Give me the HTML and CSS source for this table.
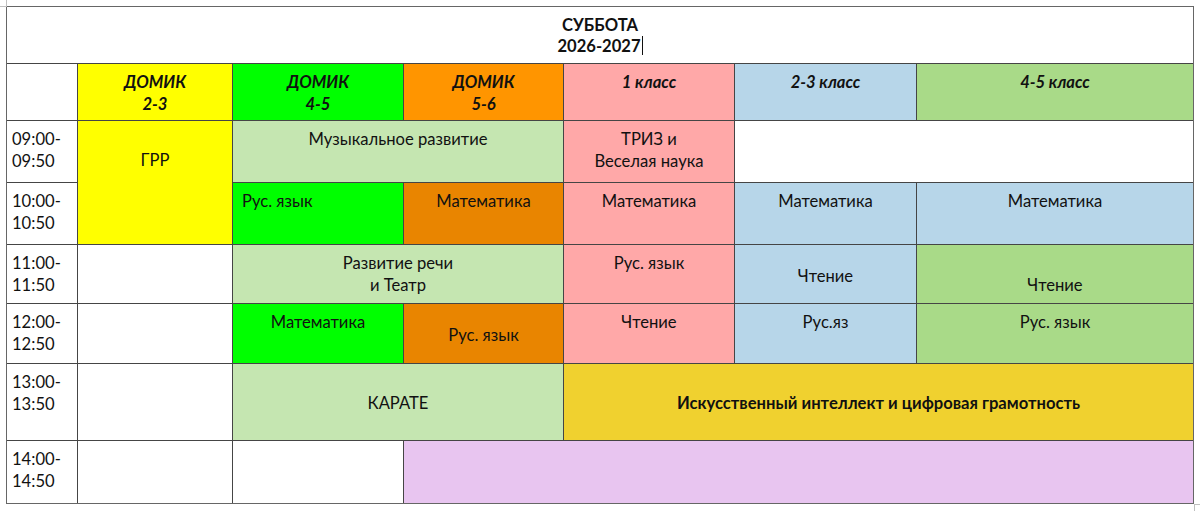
FILE: index.html
```html
<!DOCTYPE html>
<html lang="ru">
<head>
<meta charset="utf-8">
<title>Суббота 2026-2027</title>
<link rel="stylesheet" href="styles.css">
</head>
<body>
<div class="page">
  <div class="schedule">
    <div class="cell title">СУББОТА<br>2026-2027<span class="caret"></span></div>

    <div class="cell"></div>
    <div class="cell head yellow">ДОМИК<br>2-3</div>
    <div class="cell head green">ДОМИК<br>4-5</div>
    <div class="cell head orange">ДОМИК<br>5-6</div>
    <div class="cell head pink">1 класс</div>
    <div class="cell head blue">2-3 класс</div>
    <div class="cell head leaf">4-5 класс</div>

    <div class="cell time">09:00-<br>09:50</div>
    <div class="cell yellow grr">ГРР</div>
    <div class="cell mint span-2">Музыкальное развитие</div>
    <div class="cell pink">ТРИЗ и<br>Веселая наука</div>
    <div class="cell span-2"></div>

    <div class="cell time">10:00-<br>10:50</div>
    <div class="cell green left">Рус. язык</div>
    <div class="cell amber">Математика</div>
    <div class="cell pink">Математика</div>
    <div class="cell blue">Математика</div>
    <div class="cell blue">Математика</div>

    <div class="cell time">11:00-<br>11:50</div>
    <div class="cell"></div>
    <div class="cell mint span-2">Развитие речи<br>и Театр</div>
    <div class="cell pink">Рус. язык</div>
    <div class="cell blue mid">Чтение</div>
    <div class="cell leaf low">Чтение</div>

    <div class="cell time">12:00-<br>12:50</div>
    <div class="cell"></div>
    <div class="cell green">Математика</div>
    <div class="cell amber mid">Рус. язык</div>
    <div class="cell pink">Чтение</div>
    <div class="cell blue">Рус.яз</div>
    <div class="cell leaf">Рус. язык</div>

    <div class="cell time">13:00-<br>13:50</div>
    <div class="cell"></div>
    <div class="cell mint span-2 center">КАРАТЕ</div>
    <div class="cell gold span-3 center bold">Искусственный интеллект и цифровая грамотность</div>

    <div class="cell time">14:00-<br>14:50</div>
    <div class="cell"></div>
    <div class="cell"></div>
    <div class="cell lilac span-4"></div>
  </div>
  <span class="mark mark-tl"></span>
  <span class="mark mark-br"></span>
</div>
</body>
</html>
```

FILE: styles.css
```css
html, body {
  margin: 0;
  padding: 0;
  background: #ffffff;
}

.page {
  position: relative;
  width: 1200px;
  height: 511px;
  padding: 6px 0 0 6px;
  box-sizing: border-box;
}

.schedule {
  display: grid;
  grid-template-columns: 70px 154px 170px 159px 170px 181px 276px;
  grid-template-rows: 56px 56px 61px 61px 58px 59px 76px 62px;
  gap: 1px;
  width: 1186px;
  background: #454545;
  border: 1px solid #666666;
  font-family: Lato, "Open Sans", "Noto Sans", sans-serif;
  font-size: 16.6px;
  line-height: 22px;
  color: #111111;
}

.cell {
  background: #ffffff;
  text-align: center;
  padding: 7px 4px 0;
  box-sizing: border-box;
  overflow: hidden;
  white-space: nowrap;
}

.title {
  grid-column: 1 / -1;
  font-weight: 700;
  line-height: 21px;
  padding-top: 8px;
}

.caret {
  display: inline-block;
  width: 0;
  height: 19px;
  border-left: 1px solid #111;
  vertical-align: -3px;
  margin-left: 1px;
}

.head {
  font-weight: 700;
  font-style: italic;
}

.time {
  text-align: left;
  padding-left: 5px;
}

.left {
  text-align: left;
  padding-left: 9px;
}

.grr {
  grid-row: span 2;
  padding-top: 28px;
}

.mid { padding-top: 20px; }
.low { padding-top: 29px; }

.center {
  display: flex;
  align-items: center;
  justify-content: center;
  padding-top: 2px;
}

.bold { font-weight: 700; }

.span-2 { grid-column: span 2; }
.span-3 { grid-column: span 3; }
.span-4 { grid-column: span 4; }

.yellow { background: #ffff00; }
.green  { background: #00ff00; }
.orange { background: #ff9500; }
.amber  { background: #e98500; }
.pink   { background: #ffa8a8; }
.blue   { background: #b7d6e9; }
.leaf   { background: #a9da88; }
.mint   { background: #c5e6b1; }
.gold   { background: #f0d12f; }
.lilac  { background: #e8c5f0; }

.mark {
  position: absolute;
  width: 6px;
  height: 6px;
  border-color: #c0c0c0;
  border-style: solid;
  border-width: 0;
}

.mark-tl {
  left: 0;
  top: 0;
  border-right-width: 1px;
  border-bottom-width: 1px;
}

.mark-br {
  left: 1194px;
  top: 504px;
  border-left-width: 1px;
  border-top-width: 1px;
}
```
